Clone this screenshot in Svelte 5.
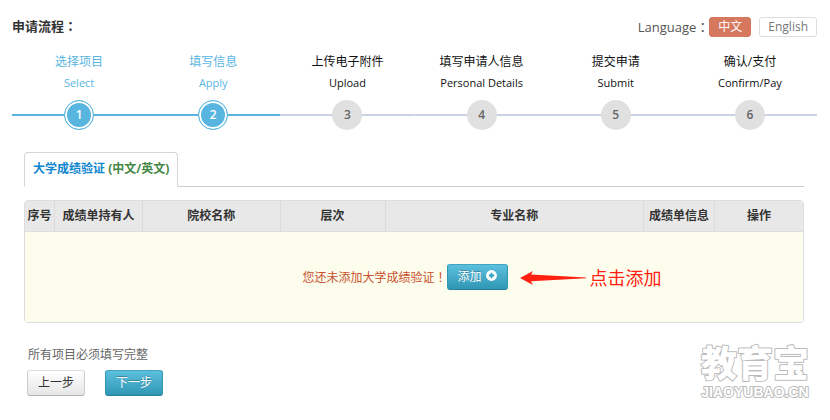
<script>
  const steps = [
    { zh: '选择项目', en: 'Select' },
    { zh: '填写信息', en: 'Apply' },
    { zh: '上传电子附件', en: 'Upload' },
    { zh: '填写申请人信息', en: 'Personal Details' },
    { zh: '提交申请', en: 'Submit' },
    { zh: '确认/支付', en: 'Confirm/Pay' }
  ];
  const columns = [
    { name: '序号', share: 29 },
    { name: '成绩单持有人', share: 88 },
    { name: '院校名称', share: 138 },
    { name: '层次', share: 105 },
    { name: '专业名称', share: 259 },
    { name: '成绩单信息', share: 71 },
    { name: '操作', share: 89 }
  ];
  const total = columns.reduce((sum, c) => sum + c.share, 0);
  let current = $state(2);
  let language = $state('zh');
</script>

<main>
  <header>
    <h1>申请流程<span class="mark">：</span></h1>
    <div class="language">
      <span>Language<span class="mark">：</span></span>
      <div class="choices">
        <button class="lang" class:active={language === 'zh'} onclick={() => (language = 'zh')}>中文</button>
        <button class="lang" class:active={language === 'en'} onclick={() => (language = 'en')}>English</button>
      </div>
    </div>
  </header>

  <ol class="steps">
    {#each steps as step, i}
      <li class:done={i < current}>
        <span class="zh">{step.zh}</span>
        <span class="en">{step.en}</span>
        <span class="track"><span class="dot">{i + 1}</span></span>
      </li>
    {/each}
  </ol>

  <section>
    <nav class="tabs">
      <a href="#transcript">大学成绩验证 <span>(中文/英文)</span></a>
    </nav>

    <table id="transcript">
      <colgroup>
        {#each columns as c}
          <col style="width: {(c.share / total) * 100}%" />
        {/each}
      </colgroup>
      <thead>
        <tr>
          {#each columns as c}
            <th scope="col">{c.name}</th>
          {/each}
        </tr>
      </thead>
      <tbody>
        <tr>
          <td colspan={columns.length}>
            <div class="empty">
              <span>您还未添加大学成绩验证<span class="mark">！</span></span>
              <div class="add">
                <button class="btn primary">
                  添加
                  <svg width="11" height="11" viewBox="0 0 11 11" aria-hidden="true">
                    <circle cx="5.5" cy="5.5" r="5.4" fill="#fff" />
                    <path d="M5.5 2.800v5.400M2.800 5.500h5.400" stroke="#37a0bf" stroke-width="1.8" />
                  </svg>
                </button>
                <div class="hint">
                  <svg width="66" height="16" viewBox="0 0 66 16" aria-hidden="true">
                    <path d="M0 8 13 1 11 4.600 66 7.500V8.300L11 11.200 13 15Z" fill="#ff2010" />
                  </svg>
                  <span>点击添加</span>
                </div>
              </div>
            </div>
          </td>
        </tr>
      </tbody>
    </table>
  </section>

  <footer>
    <div>
      <p>所有项目必须填写完整</p>
      <div class="actions">
        <button class="btn plain">上一步</button>
        <button class="btn primary">下一步</button>
      </div>
    </div>
    <svg class="brand" width="114" height="68" viewBox="0 0 114 68" role="img" aria-label="教育宝">
      <text class="brand-zh" x="57" y="44">教育宝</text>
      <text class="brand-en" x="57" y="64">JIAOYUBAO.CN</text>
    </svg>
  </footer>
</main>

<style>
  :global(body) {
    margin: 0;
    background: #fff;
  }
  main {
    padding: 16px 13px 0 12px;
    font: 12px/20px 'Open Sans', 'Noto Sans CJK SC', sans-serif;
    color: #333;
  }
  button {
    font: inherit;
    cursor: pointer;
  }
  header {
    display: flex;
    justify-content: space-between;
    height: 36px;
  }
  h1 {
    margin: 0;
    font: bold 13px/20px 'Noto Sans CJK SC', sans-serif;
  }
  .mark {
    font-family: 'Noto Sans CJK TC', sans-serif;
  }
  .language {
    display: flex;
    align-items: flex-start;
    color: #555;
    font-size: 13px;
    line-height: 22px;
  }
  .choices {
    display: flex;
    gap: 8px;
    margin-top: 1px;
  }
  .lang {
    box-sizing: border-box;
    height: 20px;
    padding: 0 8px;
    border: 1px solid #ddd;
    border-radius: 3px;
    background: #fff;
    color: #777;
    font-size: 12px;
    line-height: 18px;
  }
  .lang.active {
    border-color: #d5785e;
    background: #d5785e;
    color: #fff;
  }
  .steps {
    display: flex;
    margin: 0;
    padding: 0;
    list-style: none;
    text-align: center;
    color: #111;
  }
  .steps li {
    flex: 1;
    display: flex;
    flex-direction: column;
  }
  .steps .done {
    color: #58b5df;
  }
  .en {
    margin-top: 1px;
    font-size: 11px;
  }
  .track {
    display: flex;
    justify-content: center;
    margin-top: 7px;
    background: linear-gradient(#c9d3e4, #c9d3e4) center / 100% 2px no-repeat;
  }
  .done .track {
    background-image: linear-gradient(#58b5df, #58b5df);
  }
  .dot {
    box-sizing: border-box;
    width: 30px;
    height: 30px;
    border-radius: 50%;
    background: #e0e0e0;
    color: #666;
    font-size: 12px;
    font-weight: 600;
    line-height: 30px;
  }
  .done .dot {
    border: 1px solid #58b5df;
    background: #58b5df;
    box-shadow: inset 0 0 0 2px #fff;
    color: #fff;
    line-height: 28px;
  }
  section {
    margin: 22px 13px 0 12px;
  }
  .tabs {
    display: flex;
    border-bottom: 1px solid #ccc;
  }
  .tabs a {
    margin-bottom: -1px;
    padding: 6px 8px 7px;
    border: 1px solid #d5d5d5;
    border-bottom-color: #fff;
    border-radius: 4px 4px 0 0;
    background: #fff;
    color: #0f86d0;
    font-weight: bold;
    text-decoration: none;
  }
  .tabs span {
    color: #468847;
  }
  table {
    width: 100%;
    margin-top: 13px;
    table-layout: fixed;
    border: 1px solid #ddd;
    border-radius: 4px;
    border-spacing: 0;
    overflow: hidden;
  }
  th {
    padding: 5px 0;
    border-left: 1px solid #dcdcdc;
    border-bottom: 1px solid #ddd;
    background: #e8e8e8;
    white-space: nowrap;
  }
  th:first-child {
    border-left: 0;
  }
  td {
    padding: 32px 0;
    background: #fcfdec;
  }
  .empty {
    display: flex;
    align-items: center;
    justify-content: center;
    margin-right: 18px;
    color: #c9502c;
  }
  .add {
    position: relative;
  }
  .hint {
    position: absolute;
    left: 100%;
    top: 0;
    display: flex;
    align-items: center;
    gap: 4px;
    height: 28px;
    margin-left: 12px;
    color: #ff2010;
    font-size: 18px;
    white-space: nowrap;
  }
  .btn {
    display: flex;
    align-items: center;
    gap: 4px;
    padding: 2px 10px;
    border: 1px solid #2f96b4;
    border-color: #43a5c1 #2f96b4 #24809c;
    border-radius: 3px;
    background: linear-gradient(#5bc0de, #2f96b4);
    color: #fff;
    text-shadow: 0 -1px 0 rgba(0, 0, 0, 0.25);
  }
  .btn svg {
    margin-bottom: 3px;
  }
  .btn.plain {
    border-color: #ddd #ccc #b3b3b3;
    background: linear-gradient(#fff, #e6e6e6);
    color: #333;
    text-shadow: none;
  }
  footer {
    display: flex;
    justify-content: space-between;
    align-items: flex-start;
    padding: 10px 5px 0 15px;
  }
  p {
    margin: 12px 0 5px;
    padding-left: 1px;
    color: #666;
  }
  .actions {
    display: flex;
    gap: 20px;
  }
  .brand text {
    fill: #fff;
    stroke: #bbb;
    stroke-linejoin: round;
    stroke-width: 2px;
    paint-order: stroke;
    text-anchor: middle;
    font-weight: 900;
  }
  .brand .brand-zh {
    font-family: 'Noto Sans CJK SC', sans-serif;
    font-size: 36px;
  }
  .brand .brand-en {
    font-family: 'Liberation Sans', sans-serif;
    font-size: 14px;
  }
</style>
